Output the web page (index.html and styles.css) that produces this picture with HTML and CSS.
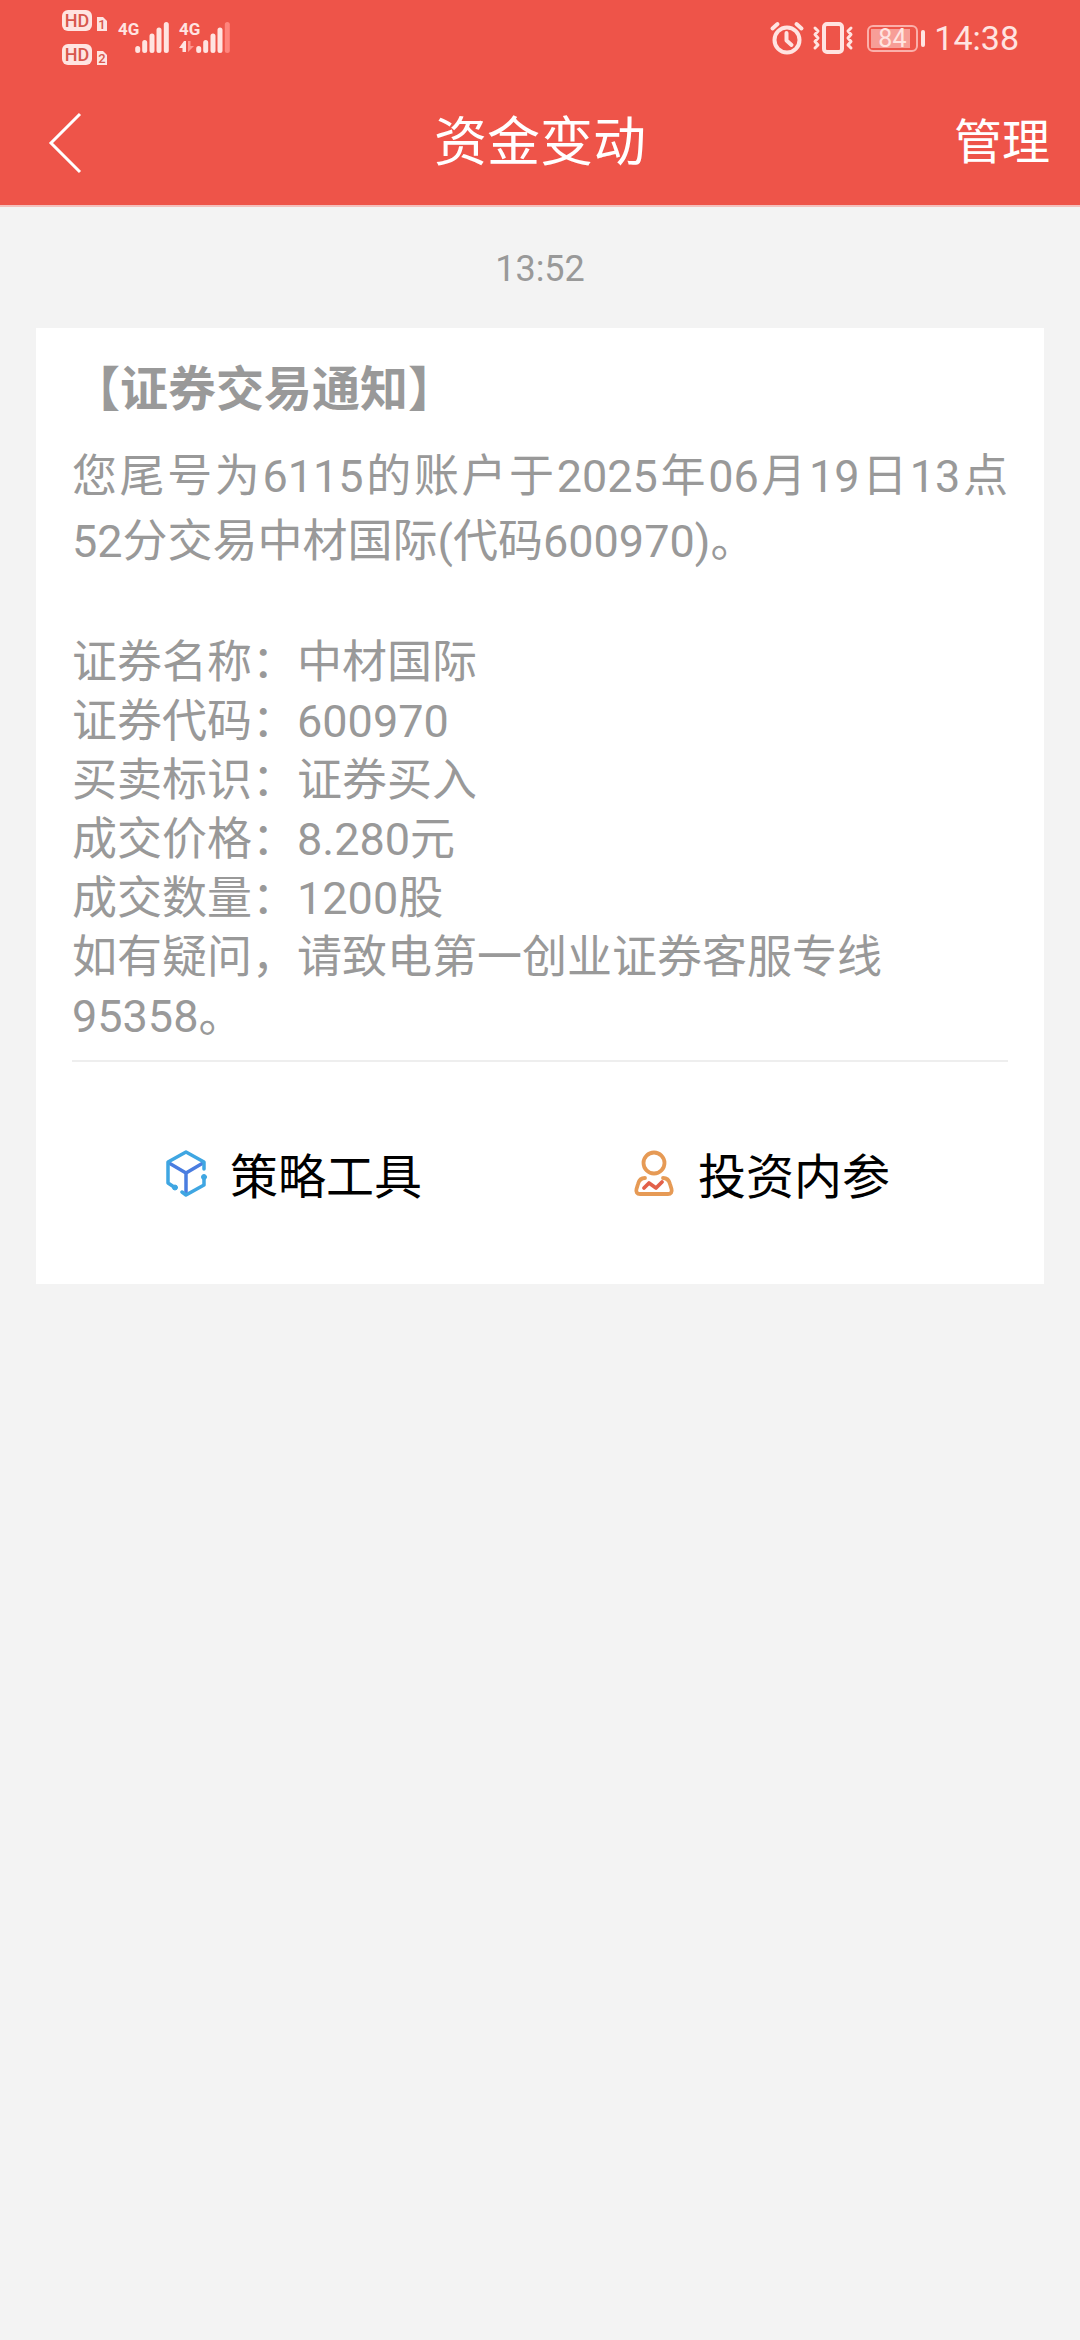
FILE: index.html
```html
<!DOCTYPE html>
<html lang="zh-CN">
<head>
<meta charset="utf-8">
<meta name="viewport" content="width=device-width, initial-scale=1">
<title>资金变动</title>
<link rel="stylesheet" href="styles.css">
</head>
<body>
<header class="top">
  <div class="status">
    <div class="status-left">
      <div class="hd-list">
        <svg class="hd" viewBox="0 0 46 21"><rect width="30" height="21" rx="6"/><path d="M36 0h6l4 4v10h-10z" transform="translate(-1 7)"/><text class="hd-text" x="15" y="17">HD</text><text class="sim-text" x="40" y="19">1</text></svg>
        <svg class="hd" viewBox="0 0 46 21"><rect width="30" height="21" rx="6"/><path d="M36 0h6l4 4v10h-10z" transform="translate(-1 7)"/><text class="hd-text" x="15" y="17">HD</text><text class="sim-text" x="40" y="19">2</text></svg>
      </div>
      <svg class="signal" viewBox="0 0 51 36"><text class="net-text" x="0" y="18">4G</text><path class="bars" d="M19.700 31.500v2M26.700 25.500v8M34 19v14.500M41 13v20.500M48.300 7.500v26"/></svg>
      <svg class="signal" viewBox="0 0 51 36"><text class="net-text" x="0" y="18">4G</text><path d="M0 31l5-7h2v11h-3.500v-4z"/><path class="faint" d="M9 24h2.500v5h3.500l-6 6z"/><path class="bars" d="M19.700 31.500v2M26.700 25.500v8M34 19v14.500M41 13v20.500"/><path class="bars faint-bar" d="M48.300 7.500v26"/></svg>
    </div>
    <div class="status-right">
      <svg class="alarm" viewBox="0 0 32 32"><circle cx="16" cy="18" r="12.500"/><path d="M15.500 11v7.500l5 4.500M1.500 6.500l5-4.500M30.500 6.500l-5-4.500"/></svg>
      <svg class="vibrate" viewBox="0 0 42 32"><rect x="12" y="2" width="18" height="28" rx="3"/><path class="wave" d="M3 6l3 3-3 3.500 3 3.500-3 3.500 3 3.500-3 3M39 6l-3 3 3 3.500-3 3.500 3 3.500-3 3.500 3 3"/></svg>
      <div class="battery"><span class="battery-body"><span class="battery-level">84</span></span><span class="battery-cap"></span></div>
      <span class="clock">14:38</span>
    </div>
  </div>
  <nav class="nav">
    <a class="back" href="#" aria-label="返回"><svg viewBox="0 0 34 62"><path d="M32 2L3 31l29 29"/></svg></a>
    <h1 class="nav-title">资金变动</h1>
    <button class="manage" type="button">管理</button>
  </nav>
</header>
<main class="feed">
  <time class="sent">13:52</time>
  <article class="card">
    <h2 class="card-title">【证券交易通知】</h2>
    <p class="summary">您尾号为6115的账户于2025年06月19日13点52分交易中材国际(代码600970)。</p>
    <dl class="details">
      <div><dt>证券名称：</dt><dd>中材国际</dd></div>
      <div><dt>证券代码：</dt><dd>600970</dd></div>
      <div><dt>买卖标识：</dt><dd>证券买入</dd></div>
      <div><dt>成交价格：</dt><dd>8.280元</dd></div>
      <div><dt>成交数量：</dt><dd>1200股</dd></div>
    </dl>
    <p class="contact">如有疑问，请致电第一创业证券客服专线95358。</p>
    <div class="actions">
      <a class="action" href="#">
        <svg class="action-icon" viewBox="0 0 48 48" fill="none" stroke-width="3.500" stroke-linecap="round" stroke-linejoin="round"><path stroke="#4a7de0" d="M7 14l17 10 17-10M24 24v20"/><path stroke="#3fa6e2" d="M42 20v-7L24 3 6 13v21l6 4M20 43l4 3 18-10v-7"/><circle cx="13" cy="38.500" r="2.500" fill="#3fa6e2" stroke="#3fa6e2" stroke-width="1"/><circle cx="42" cy="28" r="2.500" fill="#3fa6e2" stroke="#3fa6e2" stroke-width="1"/></svg>
        <span>策略工具</span>
      </a>
      <a class="action" href="#">
        <svg class="action-icon" viewBox="0 0 48 48" fill="none" stroke="#e69a55" stroke-width="3.800" stroke-linecap="round" stroke-linejoin="round"><circle cx="24" cy="14" r="10.500"/><path d="M15 29c-4 0-6 2-7 6l-1.500 5c-.8 3 .5 5 3.500 5h28c3 0 4.300-2 3.500-5L40 35c-1-4-3-6-7-6"/><path stroke="#e2604a" d="M14 39l5-5 7 5 6-6"/></svg>
        <span>投资内参</span>
      </a>
    </div>
  </article>
</main>
</body>
</html>
```
FILE: styles.css
```css
* { box-sizing: border-box; }

body {
  margin: 0;
  min-height: 100vh;
  background: #f3f3f3;
  color: #999;
  font-family: Roboto, "Noto Sans CJK SC", sans-serif;
}

h1, h2, p, dl, dd { margin: 0; }
a { color: inherit; text-decoration: none; }

.top {
  background: #ee5449;
  color: #fff;
  border-bottom: 2px solid #f3c0bd;
}

/* Status bar */
.status {
  display: flex;
  justify-content: space-between;
  height: 80px;
  padding: 10px 61px 0 62px;
  color: #ffe4e1;
}
.status svg { display: block; overflow: visible; fill: #ffe4e1; }
.status-left { display: flex; align-items: flex-start; gap: 10px; }
.hd-list { display: flex; flex-direction: column; gap: 13px; }
.hd { width: 46px; height: 21px; }
.status .hd text { fill: #d8574d; text-anchor: middle; font-weight: 500; }
.hd-text { font-size: 18px; }
.sim-text { font-size: 13px; }
.signal { width: 51px; height: 36px; margin-top: 7px; }
.net-text { font-size: 17px; font-weight: 700; }
.bars { stroke: #ffe4e1; stroke-width: 5; stroke-linecap: round; }
.status .faint { fill: #ff948c; }
.faint-bar { stroke: #ff857d; }

.status-right { display: flex; align-items: center; height: 56px; gap: 9px; }
.alarm { width: 32px; height: 32px; }
.vibrate { width: 42px; height: 32px; }
.status .alarm, .status .vibrate { fill: none; stroke: #ffe4e1; stroke-width: 4; stroke-linecap: round; stroke-linejoin: round; }
.vibrate .wave { stroke-width: 3; }
.battery { display: flex; align-items: center; gap: 3px; margin-left: 4px; }
.battery-body {
  width: 51px;
  height: 27px;
  padding: 2px;
  border: 2px solid #fbb0aa;
  border-radius: 6px;
}
.battery-level {
  display: block;
  width: 39px;
  height: 19px;
  padding-left: 7px;
  background: #f79e97;
  font-size: 25px;
  line-height: 19px;
}
.battery-cap { width: 4px; height: 17px; border-radius: 2px; background: #ffe4e1; }
.clock { font-size: 34px; line-height: 40px; }

/* Title bar */
.nav {
  display: grid;
  grid-template-columns: 1fr auto 1fr;
  align-items: center;
  height: 125px;
  padding: 0 30px;
}
.back { justify-self: start; padding-left: 18px; }
.back svg { display: block; width: 34px; height: 62px; fill: none; stroke: #fff; stroke-width: 3; }
.nav-title { font-size: 53px; font-weight: 400; line-height: 64px; }
.manage {
  justify-self: end;
  padding: 0;
  border: 0;
  background: none;
  color: inherit;
  font: inherit;
  font-size: 48px;
  line-height: 60px;
}

/* Message */
.feed { padding: 40px 36px; }
.sent {
  display: block;
  margin-bottom: 37px;
  font-size: 36px;
  line-height: 44px;
  text-align: center;
}
.card { padding: 24px 36px 0; background: #fff; }
.card-title { margin-bottom: 16px; font-size: 48px; line-height: 76px; }
.summary {
  margin-bottom: 59px;
  font-size: 45px;
  line-height: 65px;
  text-align: justify;
  text-justify: inter-character;
}
.details, .contact { font-size: 45px; line-height: 59px; }
.details div { display: flex; }
.contact { padding-bottom: 14px; }

.actions {
  display: grid;
  grid-template-columns: 1fr 1fr;
  border-top: 2px solid #eee;
}
.action {
  display: flex;
  align-items: center;
  gap: 20px;
  height: 222px;
  padding-left: 90px;
  color: #000;
  font-size: 48px;
}
.action-icon { width: 48px; height: 48px; }
```
